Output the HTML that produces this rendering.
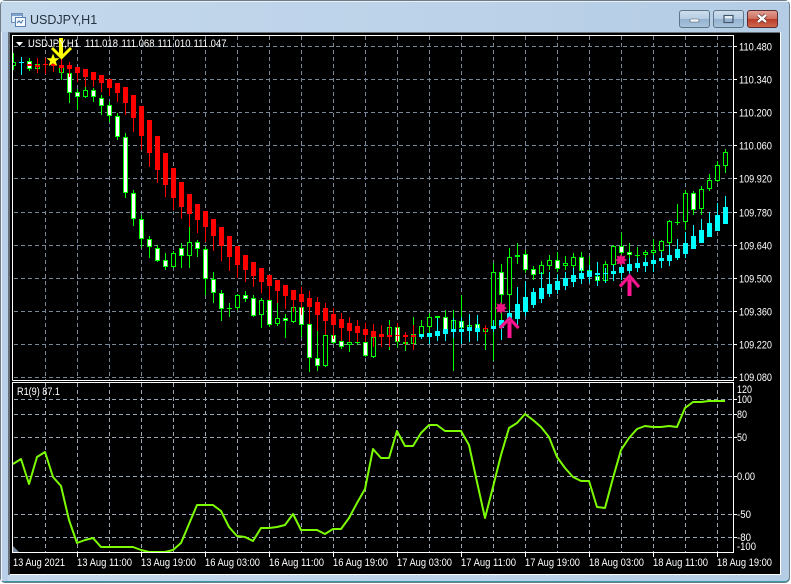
<!DOCTYPE html>
<html><head><meta charset="utf-8"><title>USDJPY,H1</title>
<style>
html,body{margin:0;padding:0;background:#fff;width:791px;height:584px;overflow:hidden}
svg{display:block}
text{font-family:"Liberation Sans",sans-serif;font-size:11px;fill:#fff}
</style></head><body>
<svg width="791" height="584" viewBox="0 0 791 584" xmlns="http://www.w3.org/2000/svg">
<defs>
<linearGradient id="t" x1="0" x2="1" y1="0" y2="0"><stop offset="0" stop-color="#c4d8ec"/><stop offset=".5" stop-color="#bdd3e9"/><stop offset="1" stop-color="#b4cde5"/></linearGradient>
<linearGradient id="b1" x1="0" x2="0" y1="0" y2="1"><stop offset="0" stop-color="#cfdfee"/><stop offset=".5" stop-color="#b5cce2"/><stop offset=".5" stop-color="#94b2cf"/><stop offset="1" stop-color="#a9c4dd"/></linearGradient>
<linearGradient id="b2" x1="0" x2="0" y1="0" y2="1"><stop offset="0" stop-color="#e0a296"/><stop offset=".5" stop-color="#cf6c5c"/><stop offset=".5" stop-color="#b93a28"/><stop offset="1" stop-color="#cf6a50"/></linearGradient>
<clipPath id="p"><rect x="13" y="36" width="720" height="344"/></clipPath>
</defs>
<!-- window -->
<rect x="0" y="0" width="790" height="583" rx="5" fill="#6f7c88"/>
<rect x="1" y="1" width="788" height="581" rx="4" fill="#3a98a8"/>
<rect x="1" y="1" width="788" height="580" rx="4" fill="url(#t)"/>
<rect x="1" y="1" width="788" height="1" fill="#e8f1f8"/>
<rect x="1" y="32" width="1" height="549" fill="#f0f6fb"/>
<rect x="2" y="32" width="6" height="549" fill="#b8cfe7"/>
<rect x="8" y="32" width="773" height="543" fill="#fff"/>
<rect x="8" y="32" width="772" height="1" fill="#666f78"/>
<rect x="8" y="32" width="2" height="543" fill="#666f78"/>
<rect x="10" y="33" width="770" height="541" fill="#000"/>
<!-- title icon -->
<g>
<rect x="11.5" y="13.5" width="11" height="9" fill="#e6f0fa" stroke="#6d8fb5"/>
<rect x="15.5" y="17.5" width="10" height="9" fill="#f5f9fd" stroke="#5a82b0"/>
<path d="M17 23l2-2 2 2 2-3" stroke="#3e6ea8" fill="none"/>
<rect x="12" y="14" width="10" height="2" fill="#7ea3cc"/>
</g>
<text x="30" y="24" style="font-size:12.5px;fill:#24313f">USDJPY,H1</text>
<!-- buttons -->
<rect x="679.5" y="10.5" width="30" height="17" rx="2.5" fill="url(#b1)" stroke="#5e7488"/>
<rect x="713.5" y="10.5" width="30" height="17" rx="2.5" fill="url(#b1)" stroke="#5e7488"/>
<rect x="747.5" y="10.5" width="30" height="17" rx="2.5" fill="url(#b2)" stroke="#5c2a30"/>
<rect x="690" y="19" width="9" height="3" rx="1" fill="#f4f7fa" stroke="#4a5a6a" stroke-width=".6"/>
<rect x="724" y="15.5" width="9" height="7" fill="none" stroke="#46566a" stroke-width="1.2"/>
<rect x="725" y="16" width="7" height="2" fill="#e8eef5"/>
<path d="M758 15l8 7M766 15l-8 7" stroke="#4a2020" stroke-width="3.6"/>
<path d="M758 15l8 7M766 15l-8 7" stroke="#fff" stroke-width="2.4"/>
<!-- grid -->
<g fill="none" stroke="#778899" stroke-width="1" stroke-dasharray="4 3">
<path d="M14 46.5H733M14 79.5H733M14 112.5H733M14 145.5H733M14 178.5H733M14 212.5H733M14 245.5H733M14 278.5H733M14 311.5H733M14 344.5H733M14 377.5H733"/>
<path d="M45.5 36V380M77.5 36V380M109.5 36V380M141.5 36V380M173.5 36V380M205.5 36V380M237.5 36V380M269.5 36V380M301.5 36V380M333.5 36V380M365.5 36V380M397.5 36V380M429.5 36V380M461.5 36V380M493.5 36V380M525.5 36V380M557.5 36V380M589.5 36V380M621.5 36V380M653.5 36V380M685.5 36V380M717.5 36V380"/>
</g>
<g fill="none" stroke="#9aa8b6" stroke-width="1" stroke-dasharray="4 3">
<path d="M14 399.5H733M14 414.5H733M14 437.5H733M14 476.5H733M14 514.5H733M14 537.5H733"/>
<path d="M45.5 383V553M77.5 383V553M109.5 383V553M141.5 383V553M173.5 383V553M205.5 383V553M237.5 383V553M269.5 383V553M301.5 383V553M333.5 383V553M365.5 383V553M397.5 383V553M429.5 383V553M461.5 383V553M493.5 383V553M525.5 383V553M557.5 383V553M589.5 383V553M621.5 383V553M653.5 383V553M685.5 383V553M717.5 383V553"/>
</g>
<g clip-path="url(#p)">
<!-- green wicks -->
<path fill="none" stroke="#0f0" d="M13.5 53V70M29.5 58V71M61.5 65V80M69.5 65V103M77.5 89V110M85.5 85V98M93.5 88V102M101.5 95V115M109.5 102V122M117.5 113V140M125.5 133V198M133.5 190V226M141.5 215V247M149.5 236V258M157.5 245V262M165.5 253V270M173.5 251V268M181.5 243V268M189.5 227V268M197.5 240V257M205.5 247V295M213.5 272V303M221.5 290V321M229.5 303V317M227 308.5H232M237.5 294V310M245.5 291V302M253.5 295V317M261.5 298V328M269.5 297V327M277.5 303V326M285.5 314V338M293.5 300V323M301.5 305V337M309.5 322V372M317.5 331V371M325.5 333V367M333.5 333V344M341.5 339V349M349.5 340V352M357.5 340V345M355 342.5H360M365.5 340V357M373.5 335V358M389.5 320V350M397.5 323V347M405.5 341V351M413.5 317V350M421.5 320V338M429.5 313V340M437.5 316V330M445.5 310V335M453.5 310V371M461.5 295V332M469.5 315V332M477.5 320V334M485.5 325V350M493.5 263V361M501.5 264V320M509.5 248V320M517.5 243V264M525.5 250V273M533.5 266V280M541.5 261V278M549.5 255V270M557.5 252V272M565.5 256V270M573.5 253V270M581.5 252V275M589.5 257V278M597.5 262V285M605.5 261V283M613.5 245V268M621.5 233V255M629.5 243V258M637.5 247V265M635 255.5H640M645.5 250V258M653.5 239V255M661.5 240V252M669.5 220V245M677.5 204V225M675 222.5H680M685.5 190V230M693.5 191V215M701.5 186V215M709.5 174V191M717.5 161V182M725.5 149V173"/>
<!-- hollow bodies -->
<path fill="#000" stroke="#0f0" d="M11.5 62.5h4V65.5h-4zM35.5 64.5h4V68.5h-4zM59.5 66.5h4V72.5h-4zM83.5 90.5h4V96.5h-4zM171.5 253.5h4V266.5h-4zM187.5 242.5h4V255.5h-4zM235.5 295.5h4V307.5h-4zM259.5 300.5h4V314.5h-4zM275.5 318.5h4V323.5h-4zM291.5 307.5h4V321.5h-4zM323.5 335.5h4V365.5h-4zM347.5 342.5h4V344.5h-4zM371.5 337.5h4V356.5h-4zM387.5 327.5h4V336.5h-4zM403.5 342.5h4V343.5h-4zM411.5 334.5h4V343.5h-4zM419.5 326.5h4V335.5h-4zM427.5 317.5h4V326.5h-4zM435.5 316.5h4V317.5h-4zM451.5 320.5h4V329.5h-4zM467.5 325.5h4V329.5h-4zM483.5 328.5h4V331.5h-4zM491.5 272.5h4V326.5h-4zM507.5 257.5h4V294.5h-4zM515.5 255.5h4V256.5h-4zM539.5 265.5h4V273.5h-4zM547.5 260.5h4V265.5h-4zM563.5 263.5h4V265.5h-4zM571.5 257.5h4V265.5h-4zM587.5 270.5h4V272.5h-4zM603.5 264.5h4V280.5h-4zM611.5 246.5h4V264.5h-4zM643.5 252.5h4V254.5h-4zM651.5 250.5h4V252.5h-4zM659.5 241.5h4V250.5h-4zM667.5 221.5h4V242.5h-4zM683.5 193.5h4V221.5h-4zM699.5 189.5h4V208.5h-4zM707.5 180.5h4V188.5h-4zM715.5 165.5h4V180.5h-4zM723.5 152.5h4V165.5h-4z"/>
<!-- white bodies -->
<path fill="#fff" stroke="#0f0" d="M27.5 61.5h4V68.5h-4zM67.5 73.5h4V92.5h-4zM75.5 92.5h4V96.5h-4zM91.5 90.5h4V96.5h-4zM99.5 98.5h4V105.5h-4zM107.5 105.5h4V115.5h-4zM115.5 116.5h4V136.5h-4zM123.5 137.5h4V192.5h-4zM131.5 193.5h4V218.5h-4zM139.5 219.5h4V238.5h-4zM147.5 239.5h4V246.5h-4zM155.5 248.5h4V260.5h-4zM163.5 260.5h4V266.5h-4zM179.5 248.5h4V255.5h-4zM195.5 242.5h4V248.5h-4zM203.5 249.5h4V278.5h-4zM211.5 279.5h4V292.5h-4zM219.5 293.5h4V308.5h-4zM243.5 295.5h4V298.5h-4zM251.5 298.5h4V315.5h-4zM267.5 300.5h4V324.5h-4zM283.5 318.5h4V320.5h-4zM299.5 307.5h4V324.5h-4zM307.5 324.5h4V357.5h-4zM315.5 358.5h4V365.5h-4zM331.5 335.5h4V342.5h-4zM339.5 341.5h4V346.5h-4zM363.5 342.5h4V355.5h-4zM395.5 327.5h4V341.5h-4zM443.5 317.5h4V329.5h-4zM459.5 321.5h4V327.5h-4zM475.5 324.5h4V330.5h-4zM499.5 272.5h4V294.5h-4zM523.5 254.5h4V269.5h-4zM531.5 269.5h4V274.5h-4zM555.5 260.5h4V268.5h-4zM579.5 257.5h4V270.5h-4zM595.5 276.5h4V280.5h-4zM619.5 246.5h4V252.5h-4zM627.5 252.5h4V254.5h-4zM691.5 193.5h4V209.5h-4z"/>
<!-- red wicks -->
<path fill="none" stroke="#f00" d="M37.5 58V73M45.5 58V74M53.5 60V72M61.5 55V73M69.5 62V77M77.5 67V82M85.5 69V87M93.5 72V87M101.5 75V92M109.5 79V96M117.5 83V102M125.5 87V115M133.5 95V132M141.5 106V150M149.5 120V167M157.5 136V183M165.5 153V197M173.5 168V210M181.5 182V219M189.5 194V227M197.5 204V233M205.5 211V242M213.5 219V251M221.5 227V261M229.5 236V271M237.5 246V278M245.5 255V282M253.5 262V287M261.5 268V293M269.5 275V300M277.5 280V303M285.5 285V309M293.5 290V312M301.5 287V315M309.5 291V324M317.5 297V331M325.5 303V335M333.5 308V339M341.5 313V341M349.5 317V342M357.5 320V342M365.5 323V342M373.5 324V347M381.5 325V347M389.5 325V347M397.5 323V342M405.5 332V345M413.5 325V350M485.5 325V334"/>
<!-- red bodies -->
<path fill="#f00" d="M27 64h5v2h-5zM35 65h5v2h-5zM43 64h5v1h-5zM51 64h5v2h-5zM59 65h5v3h-5zM67 65h5v4h-5zM75 67h5v6h-5zM83 69h5v8h-5zM91 72h5v8h-5zM99 75h5v8h-5zM107 79h5v9h-5zM115 83h5v10h-5zM123 87h5v16h-5zM131 95h5v23h-5zM139 106h5v30h-5zM147 120h5v33h-5zM155 136h5v34h-5zM163 153h5v32h-5zM171 168h5v30h-5zM179 182h5v25h-5zM187 194h5v20h-5zM195 204h5v16h-5zM203 211h5v16h-5zM211 219h5v17h-5zM219 227h5v19h-5zM227 236h5v21h-5zM235 246h5v19h-5zM243 255h5v15h-5zM251 262h5v14h-5zM259 268h5v14h-5zM267 275h5v11h-5zM275 280h5v11h-5zM283 285h5v11h-5zM291 290h5v10h-5zM299 294h5v8h-5zM307 298h5v9h-5zM315 302h5v13h-5zM323 308h5v13h-5zM331 314h5v11h-5zM339 319h5v9h-5zM347 323h5v8h-5zM355 326h5v7h-5zM363 329h5v6h-5zM371 331h5v6h-5zM379 334h5v3h-5zM387 335h5v2h-5zM395 335h5v1h-5zM403 335h5v2h-5zM411 335h5v2h-5zM483 328h5v1h-5z"/>
<!-- cyan wicks -->
<path fill="none" stroke="#0ff" d="M21.5 57V75M421.5 334V339M429.5 333V344M437.5 318V341M445.5 329V341M453.5 318V338M461.5 317V344M469.5 314V342M477.5 315V341M493.5 320V332M501.5 320V340M509.5 310V330M517.5 287V325M525.5 281V316M533.5 288V308M541.5 272V303M549.5 272V297M557.5 275V294M565.5 272V290M573.5 268V287M581.5 268V284M589.5 265V283M597.5 262V286M605.5 268V283M613.5 265V281M621.5 262V280M629.5 258V274M637.5 258V272M645.5 258V272M653.5 255V272M661.5 252V268M669.5 245V266M677.5 239V260M685.5 232V258M693.5 225V249M701.5 219V243M709.5 212V237M717.5 203V231M725.5 196V224"/>
<!-- cyan bodies -->
<path fill="#0ff" d="M19 62h5v1h-5zM419 334h5v3h-5zM427 333h5v4h-5zM435 331h5v5h-5zM443 329h5v5h-5zM451 329h5v3h-5zM459 329h5v3h-5zM467 327h5v4h-5zM475 328h5v4h-5zM491 326h5v3h-5zM499 320h5v8h-5zM507 313h5v9h-5zM515 304h5v15h-5zM523 297h5v15h-5zM531 292h5v13h-5zM539 288h5v11h-5zM547 284h5v10h-5zM555 281h5v9h-5zM563 278h5v8h-5zM571 275h5v7h-5zM579 273h5v6h-5zM587 271h5v6h-5zM595 273h5v2h-5zM603 273h5v1h-5zM611 271h5v3h-5zM619 267h5v6h-5zM627 264h5v7h-5zM635 263h5v5h-5zM643 262h5v4h-5zM651 260h5v4h-5zM659 258h5v3h-5zM667 255h5v6h-5zM675 249h5v9h-5zM683 243h5v11h-5zM691 236h5v13h-5zM699 230h5v13h-5zM707 223h5v14h-5zM715 215h5v16h-5zM723 207h5v17h-5z"/>
<!-- markers -->
<polygon points="53,53.5 54.8,58.2 59.5,58.2 55.8,61.2 57.2,66 53,63.2 48.8,66 50.2,61.2 46.5,58.2 51.2,58.2" fill="#ff0"/>
<path d="M59 38h4v19h-4z" fill="#ff0"/>
<path d="M52 48l9.500 9.500L71 48" fill="none" stroke="#ff0" stroke-width="3"/>
<polygon points="501,302 502.300,304.500 505.500,303.500 504.500,306.500 507,308 504.500,309.500 505.500,312.500 502.300,311.500 501,314 499.700,311.500 496.500,312.500 497.500,309.500 495,308 497.500,306.500 496.500,303.500 499.700,304.500" fill="#e9147f"/>
<polygon points="621,254 622.300,256.500 625.500,255.500 624.500,258.500 627,260 624.500,261.500 625.500,264.500 622.300,263.500 621,266 619.700,263.500 616.500,264.500 617.500,261.500 615,260 617.500,258.500 616.500,255.500 619.700,256.500" fill="#e9147f"/>
<path d="M507.500 320h4v18h-4z" fill="#ff1493"/>
<path d="M500 328l9.500-9.500L518.500 328" fill="none" stroke="#c8106f" stroke-width="3.400"/>
<path d="M500 328l9.500-9.500L518.500 328" fill="none" stroke="#ff1493" stroke-width="2"/>
<path d="M627.500 277h4v19h-4z" fill="#ff1493"/>
<path d="M620 286.500l9.500-10.500L639 287" fill="none" stroke="#c8106f" stroke-width="3.400"/>
<path d="M620 286.500l9.500-10.500L639 287" fill="none" stroke="#ff1493" stroke-width="2"/>
</g>
<!-- RSI line -->
<polyline fill="none" stroke="#7cfc00" stroke-width="2" stroke-linejoin="round" points="13,464 21,459 29,484 37,457 45,452 53,477 61,486 69,520 77,543 85,540 93,538 101,547 109,547 117,547 125,547 133,547 141,550 149,552 157,552 165,552 173,550 181,543 189,524 197,505 205,505 213,505 221,511 229,527 237,536 245,537 253,541 261,528 269,528 277,527 285,525 293,514 301,530 309,530 317,530 325,534 333,529 341,529 349,518 357,503 365,489 373,449 381,458 389,458 397,431 405,446 413,446 421,433 429,425 437,425 445,431 453,431 461,431 469,445 477,482 485,518 493,487 501,455 509,428 517,423 525,414 533,420 541,427 549,437 557,457 565,468 573,477 581,481 589,481 597,507 605,508 613,478 621,450 629,438 637,429 645,426 653,427 661,427 669,426 677,427 685,408 693,402 701,402 709,401 717,401 725,401"/>
<!-- frames -->
<g fill="none" stroke="#fff" stroke-width="1">
<path d="M12.500 380.500V35.500H733.500V380.500H12.500"/>
<path d="M12.500 382.500H733.500V552.500H12.500Z"/>
<path d="M734 46.500h3M734 79.500h3M734 112.500h3M734 145.500h3M734 178.500h3M734 212.500h3M734 245.500h3M734 278.500h3M734 311.500h3M734 344.500h3M734 377.500h3M734 399.500h3M734 414.500h3M734 437.500h3M734 476.500h3M734 514.500h3M734 537.500h3"/>
<path d="M77.500 553v4M141.500 553v4M205.500 553v4M269.500 553v4M333.500 553v4M397.500 553v4M461.500 553v4M525.500 553v4M589.500 553v4M653.500 553v4M717.500 553v4"/>
</g>
<polygon points="13,546 13,552 19,552" fill="#778899"/>
<polygon points="16,42 23,42 19.500,46" fill="#fff"/>
<!-- legend -->
<text x="28" y="47" textLength="51" lengthAdjust="spacingAndGlyphs">USDJPY,H1</text>
<text x="85" y="47" textLength="33" lengthAdjust="spacingAndGlyphs">111.018</text>
<text x="121.500" y="47" textLength="33" lengthAdjust="spacingAndGlyphs">111.068</text>
<text x="157.500" y="47" textLength="33" lengthAdjust="spacingAndGlyphs">111.010</text>
<text x="193.500" y="47" textLength="33" lengthAdjust="spacingAndGlyphs">111.047</text>
<text x="17" y="395" textLength="43" lengthAdjust="spacingAndGlyphs">R1(9) 87.1</text>
<!-- price axis -->
<g>
<text x="739" y="50.500" textLength="33" lengthAdjust="spacingAndGlyphs">110.480</text>
<text x="739" y="83.500" textLength="33" lengthAdjust="spacingAndGlyphs">110.340</text>
<text x="739" y="116.500" textLength="33" lengthAdjust="spacingAndGlyphs">110.200</text>
<text x="739" y="149.500" textLength="33" lengthAdjust="spacingAndGlyphs">110.060</text>
<text x="739" y="182.500" textLength="33" lengthAdjust="spacingAndGlyphs">109.920</text>
<text x="739" y="216.500" textLength="33" lengthAdjust="spacingAndGlyphs">109.780</text>
<text x="739" y="249.500" textLength="33" lengthAdjust="spacingAndGlyphs">109.640</text>
<text x="739" y="282.500" textLength="33" lengthAdjust="spacingAndGlyphs">109.500</text>
<text x="739" y="315.500" textLength="33" lengthAdjust="spacingAndGlyphs">109.360</text>
<text x="739" y="348.500" textLength="33" lengthAdjust="spacingAndGlyphs">109.220</text>
<text x="739" y="381" textLength="33" lengthAdjust="spacingAndGlyphs">109.080</text>
<text x="737" y="393" textLength="15" lengthAdjust="spacingAndGlyphs">120</text>
<text x="737" y="403" textLength="15" lengthAdjust="spacingAndGlyphs">100</text>
<text x="737" y="418" textLength="10" lengthAdjust="spacingAndGlyphs">80</text>
<text x="737" y="441" textLength="10" lengthAdjust="spacingAndGlyphs">50</text>
<text x="737" y="480" textLength="18" lengthAdjust="spacingAndGlyphs">0.00</text>
<text x="737" y="518" textLength="14" lengthAdjust="spacingAndGlyphs">-50</text>
<text x="737" y="541" textLength="14" lengthAdjust="spacingAndGlyphs">-80</text>
<text x="737" y="550" textLength="19" lengthAdjust="spacingAndGlyphs">-100</text>
</g>
<!-- time axis -->
<g>
<text x="13" y="566" textLength="52" lengthAdjust="spacingAndGlyphs">13 Aug 2021</text>
<text x="77" y="566" textLength="55" lengthAdjust="spacingAndGlyphs">13 Aug 11:00</text>
<text x="141" y="566" textLength="55" lengthAdjust="spacingAndGlyphs">13 Aug 19:00</text>
<text x="205" y="566" textLength="55" lengthAdjust="spacingAndGlyphs">16 Aug 03:00</text>
<text x="269" y="566" textLength="55" lengthAdjust="spacingAndGlyphs">16 Aug 11:00</text>
<text x="333" y="566" textLength="55" lengthAdjust="spacingAndGlyphs">16 Aug 19:00</text>
<text x="397" y="566" textLength="55" lengthAdjust="spacingAndGlyphs">17 Aug 03:00</text>
<text x="461" y="566" textLength="55" lengthAdjust="spacingAndGlyphs">17 Aug 11:00</text>
<text x="525" y="566" textLength="55" lengthAdjust="spacingAndGlyphs">17 Aug 19:00</text>
<text x="589" y="566" textLength="55" lengthAdjust="spacingAndGlyphs">18 Aug 03:00</text>
<text x="653" y="566" textLength="55" lengthAdjust="spacingAndGlyphs">18 Aug 11:00</text>
<text x="717" y="566" textLength="55" lengthAdjust="spacingAndGlyphs">18 Aug 19:00</text>
</g>
</svg>
</body></html>
